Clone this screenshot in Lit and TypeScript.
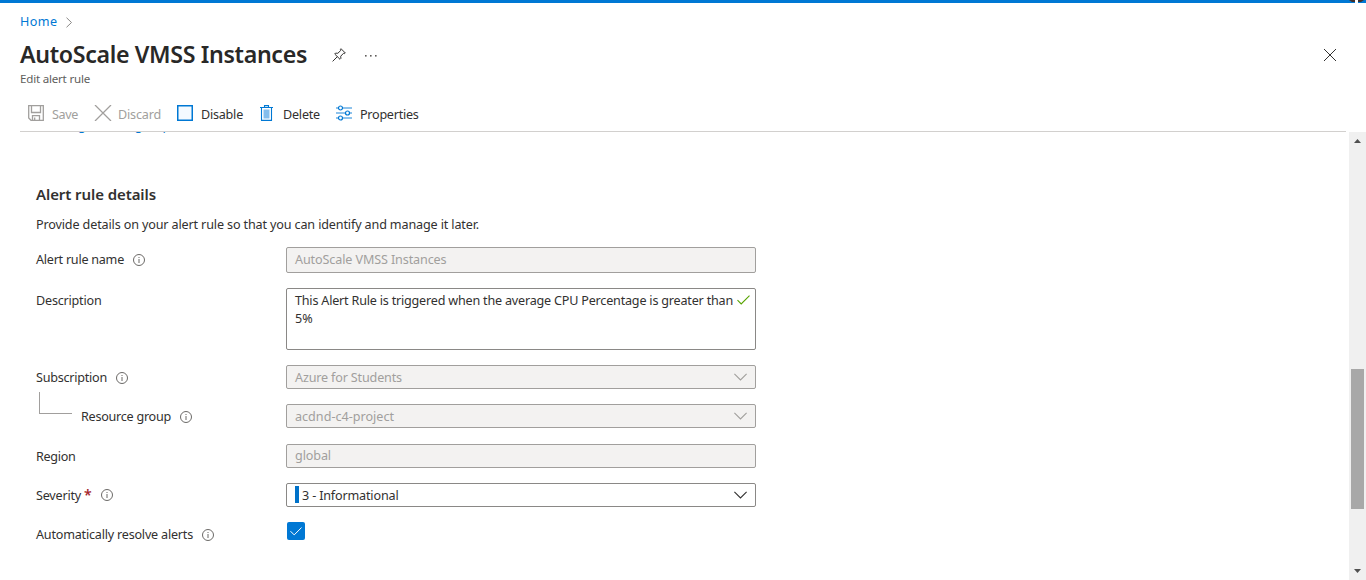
import { LitElement, html, css, nothing } from "lit";
import { customElement, property } from "lit/decorators.js";

/** A single line of text whose tracking is adjusted to fill a given width. */
@customElement("fit-text")
class FitText extends LitElement {
  @property({ type: Number }) w = 0;
  @property() text = "";
  static styles = css`
    :host { display: block; flex: none; white-space: pre; }
    span { display: inline-block; }
  `;
  render() {
    return html`<span>${this.text}</span>`;
  }
  updated() {
    const span = this.renderRoot.querySelector("span") as HTMLElement;
    span.style.letterSpacing = "0px";
    const natural = span.getBoundingClientRect().width;
    span.style.letterSpacing = `${(this.w - natural) / this.text.length}px`;
    this.style.width = `${this.w}px`;
  }
}

const t = (text: string, w: number) => html`<fit-text .text=${text} .w=${w}></fit-text>`;

const info = html`<svg class="info" width="12" height="12" viewBox="0 0 12 12" fill="none" stroke="#6b6967">
  <circle cx="6" cy="6" r="5.5" stroke-width="1" />
  <path d="M6 5v4M6 3v1" stroke-width="1" />
</svg>`;

const chevron = html`<svg class="chev" width="13" height="8" viewBox="0 0 13 8" fill="none" stroke="currentColor">
  <path d="M.4 .8L6.5 6.9L12.6 .8" stroke-width="1.1" />
</svg>`;

@customElement("app-root")
class AppRoot extends LitElement {
  static styles = css`
    :host {
      display: flex; flex-direction: column; box-sizing: border-box;
      width: 1366px; height: 580px; overflow: hidden; background: #fff;
      color: #323130; font: 12.6px/18px "Noto Sans", "Open Sans", sans-serif;
    }
    * { box-sizing: border-box; }
    svg { display: block; flex: none; }
    .top { height: 3px; background: #0078d4; flex: none; display: flex; justify-content: flex-end; }
    header { height: 128px; flex: none; padding-left: 20px; display: flex; flex-direction: column; }
    .crumbs { display: flex; align-items: center; height: 18px; margin-top: 10px; color: #0078d4; gap: 8px; }
    .titlebar { display: flex; align-items: center; height: 32px; margin-top: 8px; }
    h1 { margin: -2px 0 0; font-size: 23.2px; line-height: 32px; font-weight: 560; color: #292827; }
    .pin { margin-left: 25px; }
    .dots { margin-left: 18px; }
    .close { margin-left: auto; margin-right: 30px; }
    .sub { font-size: 11.6px; line-height: 16px; color: #605e5c; height: 16px; }
    .tools { display: flex; align-items: center; height: 24px; margin-top: 15px; padding-left: 8px; }
    .tool { display: flex; align-items: center; gap: 8px; }
    .tool.narrow { gap: 6px; }
    .tool svg { margin-top: -2px; }
    .tool fit-text { margin-top: 2px; }
    .off { color: #a19f9d; }
    .rule { height: 1px; width: 1326px; margin-left: 20px; background: #d2d0ce; flex: none; }
    .body { display: flex; height: 448px; }
    main { width: 1349px; padding-left: 36px; overflow: hidden; }
    .link { height: 3px; overflow: hidden; color: #0078d4; display: flex; align-items: flex-end; padding: 0 0 0 9px; }
    h2 { margin: 49px 0 0; font-size: 15px; line-height: 20px; font-weight: 580; height: 20px; }
    .lead { margin-top: 12px; height: 18px; }
    .form { display: grid; grid-template-columns: 250px 470px; margin-top: 13px;
      grid-template-rows: 41px 77px 39px 40px 39px 39px 30px; }
    .label { display: flex; align-items: center; gap: 9px; height: 24px; margin-top: 1px; }
    .label.plain { margin-top: 0; }
    .label.plain fit-text { margin-top: 2px; }
    .elbow { width: 33px; height: 22px; margin: -28px 0 0 3px; border: solid #a19f9d; border-width: 0 0 1px 1px; }
    .req { color: #a4262c; margin-left: -6px; margin-right: 1px; font-size: 14px; width: 7px; font-weight: 600; }
    .field { height: 24px; border: 1px solid #8a8886; border-radius: 2px; padding: 0 8px;
      display: flex; align-items: center; color: #323130; }
    .field.dis { background: #f3f2f1; border-color: #a19f9d; color: #a19f9d; }
    .field.pick fit-text { margin-top: 2px; }
    .field.tall { height: 26px; padding-bottom: 1px; }
    .field.area { height: 62px; align-items: flex-start; padding-top: 3px; padding-right: 5px; }
    .lines { display: flex; flex-direction: column; }
    .tick { margin: 3px 0 0 auto; }
    .chev { margin-left: auto; }
    .mark { width: 4px; height: 17px; background: #0072c9; margin-right: 3px; margin-top: -1px; }
    .box { width: 18px; height: 18px; background: #0078d4; border-radius: 2px; display: flex;
      align-items: center; justify-content: center; margin-left: 1px; }
    .bar { width: 17px; background: #f0f0f0; display: flex; flex-direction: column; align-items: center; }
    .up { margin-top: 7px; }
    .thumb { width: 13px; height: 140px; margin-top: 226px; background: #a8a8a8; }
    .down { margin-top: 60px; }
  `;

  row(label: string, w: number, field: unknown, hasInfo = true) {
    return html`
      <div class="label">${t(label, w)}${hasInfo ? info : nothing}</div>
      ${field}`;
  }

  render() {
    return html`
      <div class="top"><svg width="18" height="3" viewBox="0 0 18 3">
        <path d="M1 0H16L13 2H4Z" fill="#40302c" /><path d="M7 0H10V3H7Z" fill="#fff" />
      </svg></div>
      <header>
        <div class="crumbs">${t("Home", 37.5)}
          <svg width="7" height="11" viewBox="0 0 7 11" fill="none" stroke="#8a8886"><path d="M.5 .7L5.5 5.5L.5 10.3" /></svg>
        </div>
        <div class="titlebar">
          <h1>${t("AutoScale VMSS Instances", 287)}</h1>
          <svg class="pin" width="14" height="14" viewBox="0 0 14 14" fill="none" stroke="#323130" stroke-linejoin="round">
            <path d="M9 .7L13.3 5L12.4 5.6L11.5 5.3L8.7 8.2L8.9 10.4L8 11.3L2.7 6L3.6 5.1L5.8 5.3L8.7 2.5L8.4 1.6ZM5.3 8.7L.6 13.4" />
          </svg>
          <svg class="dots" width="13" height="3" viewBox="0 0 13 3" fill="#605e5c">
            <rect x="1" y="1" width="1.6" height="1.6" /><rect x="6" y="1" width="1.6" height="1.6" /><rect x="11" y="1" width="1.6" height="1.6" />
          </svg>
          <svg class="close" width="12" height="12" viewBox="0 0 12 12" stroke="#323130"><path d="M0 0L12 12M12 0L0 12" /></svg>
        </div>
        <div class="sub">${t("Edit alert rule", 70)}</div>
        <div class="tools">
          <div class="tool off">
            <svg width="16" height="16" viewBox="0 0 16 16" fill="none" stroke="#a19f9d" stroke-width="1.3">
              <path d="M.7 .7H15.3V15.3H3L.7 13ZM3.5 .7V7.5H12.5V.7M4.5 15V10.6H11.5V15M6.7 12.5V15" />
            </svg>
            ${t("Save", 26)}
          </div>
          <div class="tool narrow off">
            <svg width="34" height="16" viewBox="-17 0 34 16" fill="none" stroke="#a19f9d" stroke-width="1.3"><path d="M0 0L16 16M16 0L0 16" /></svg>
            ${t("Discard", 43)}
          </div>
          <div class="tool">
            <svg width="32" height="16" viewBox="-16 0 32 16"><rect x=".75" y=".75" width="14.5" height="14.5" fill="#f4faff" stroke="#0078d4" stroke-width="1.5" /></svg>
            ${t("Disable", 42)}
          </div>
          <div class="tool">
            <svg width="32" height="16" viewBox="-17 0 32 16" fill="none" stroke="#0078d4">
              <path d="M3.5 4.5h6v9h-6z" fill="#83bdec" stroke="none" /><path d="M0 2.5H13M4.5 2.5V.6H8.5V2.5M1.5 3V15.4H11.5V3" stroke-width="1.1" />
            </svg>
            ${t("Delete", 37)}
          </div>
          <div class="tool">
            <svg width="32" height="16" viewBox="-16 0 32 16" fill="none">
              <path d="M0 3H16M0 8H16M0 13H16" stroke="#69afe5" stroke-width="1.6" />
              <g fill="#fff" stroke="#0078d4" stroke-width="1.2"><circle cx="4.5" cy="3" r="2" /><circle cx="11.5" cy="8" r="2" /><circle cx="4.5" cy="13" r="2" /></g>
            </svg>
            ${t("Properties", 58.5)}
          </div>
        </div>
      </header>
      <div class="rule"></div>
      <div class="body">
        <main>
          <div class="link">${t("Manage action groups", 131)}</div>
          <h2>${t("Alert rule details", 120)}</h2>
          <div class="lead">${t("Provide details on your alert rule so that you can identify and manage it later.", 443)}</div>
          <div class="form">
            ${this.row("Alert rule name", 88, html`<div class="field dis tall">${t("AutoScale VMSS Instances", 151.5)}</div>`)}
            ${this.row("Description", 65.5, html`<div class="field area">
              <div class="lines">${t("This Alert Rule is triggered when the average CPU Percentage is greater than", 438)}${t("5%", 18)}</div>
              <svg class="tick" width="13" height="10" viewBox="0 0 13 10" fill="none" stroke="#57a300"><path d="M.5 5.2L4.2 8.9L12.5 .6" stroke-width="1.1" /></svg>
            </div>`, false)}
            ${this.row("Subscription", 71, html`<div class="field dis pick">${t("Azure for Students", 107)}${chevron}</div>`)}
            <div class="label"><span class="elbow"></span>${t("Resource group", 90)}${info}</div>
            <div class="field dis pick">${t("acdnd-c4-project", 99)}${chevron}</div>
            ${this.row("Region", 39.5, html`<div class="field dis">${t("global", 36)}</div>`, false)}
            <div class="label plain">${t("Severity", 45)}<span class="req">*</span>${info}</div>
            <div class="field pick"><span class="mark"></span>${t("3 - Informational", 96.5)}${chevron}</div>
            ${this.row("Automatically resolve alerts", 157, html`<div class="box">
              <svg width="12" height="9" viewBox="0 0 12 9" fill="none" stroke="#fff"><path d="M.5 4.2L4.2 7.9L11.5 .6" /></svg>
            </div>`)}
          </div>
        </main>
        <div class="bar">
          <svg class="up" width="7" height="4" viewBox="0 0 7 4" fill="#505050"><path d="M0 4L3.5 0L7 4Z" /></svg>
          <div class="thumb"></div>
          <svg class="down" width="7" height="4" viewBox="0 0 7 4" fill="#505050"><path d="M0 0H7L3.5 4Z" /></svg>
        </div>
      </div>`;
  }
}
